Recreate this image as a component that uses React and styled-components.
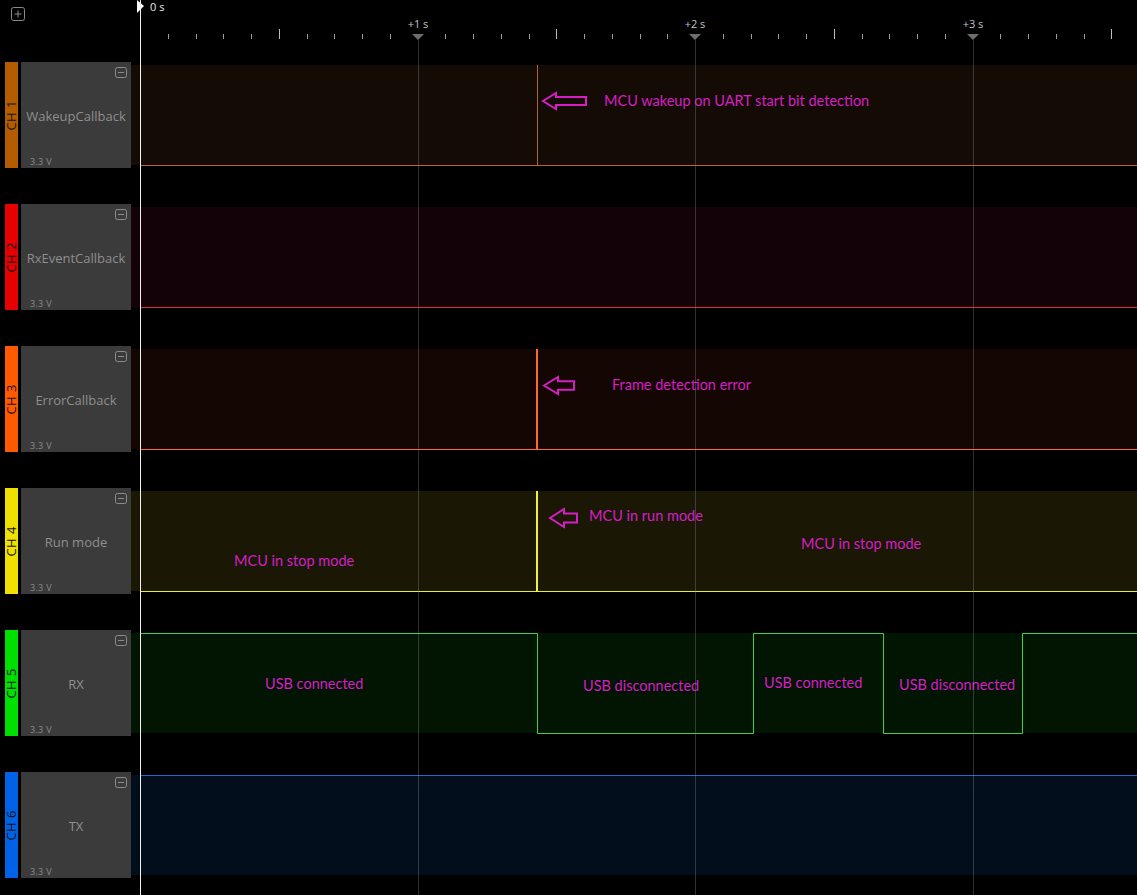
import React from "react";
import styled, { createGlobalStyle } from "styled-components";

const Global = createGlobalStyle`
  html, body { margin: 0; padding: 0; background: #000; }
  body { font-family: "Open Sans", "Noto Sans", sans-serif; }
`;

const MAGENTA = "#d41fc6";
const PX_PER_S = 277.5;
const ZERO_X = 140;
const BAND_LEFT = 131;
const BAND_W = 1137 - BAND_LEFT;

const channels = [
  {
    id: 1, name: "WakeupCallback", strip: "#b35c00", fill: "#140b05", line: "#c2622a",
    path: `M ${ZERO_X - BAND_LEFT} 100.5 H ${BAND_W}`,
    pulse: { x: 537 - BAND_LEFT, color: "#b0622e", w: 1 },
    notes: [
      { kind: "arrow", x: 412, y: 28, w: 43, h: 16 },
      { kind: "text", x: 473, y: 27, text: "MCU wakeup on UART start bit detection" },
    ],
  },
  {
    id: 2, name: "RxEventCallback", strip: "#e60000", fill: "#130308", line: "#e0283e",
    path: `M ${ZERO_X - BAND_LEFT} 100.5 H ${BAND_W}`,
    notes: [],
  },
  {
    id: 3, name: "ErrorCallback", strip: "#ff5a00", fill: "#140602", line: "#ff6a28",
    path: `M ${ZERO_X - BAND_LEFT} 100.5 H ${BAND_W}`,
    pulse: { x: 537 - BAND_LEFT, color: "#ff6a2a", w: 2 },
    notes: [
      { kind: "arrow", x: 413, y: 28, w: 30, h: 17 },
      { kind: "text", x: 481, y: 27, text: "Frame detection error" },
    ],
  },
  {
    id: 4, name: "Run mode", strip: "#f0e000", fill: "#1a1804", line: "#eaea40",
    path: `M ${ZERO_X - BAND_LEFT} 100.5 H ${BAND_W}`,
    pulse: { x: 537 - BAND_LEFT, color: "#f0f040", w: 2 },
    notes: [
      { kind: "arrow", x: 419, y: 18, w: 27, h: 18 },
      { kind: "text", x: 458, y: 16, text: "MCU in run mode" },
      { kind: "text", x: 103, y: 61, text: "MCU in stop mode" },
      { kind: "text", x: 670, y: 44, text: "MCU in stop mode" },
    ],
  },
  {
    id: 5, name: "RX", strip: "#00e000", fill: "#021402", line: "#40d040",
    path: `M ${ZERO_X - BAND_LEFT} 0.5 H ${537 - BAND_LEFT}.5 V 100.5 H ${753 - BAND_LEFT}.5 V 0.5 H ${883 - BAND_LEFT}.5 V 100.5 H ${1022 - BAND_LEFT}.5 V 0.5 H ${BAND_W}`,
    notes: [
      { kind: "text", x: 134, y: 42, text: "USB connected" },
      { kind: "text", x: 452, y: 44, text: "USB disconnected" },
      { kind: "text", x: 633, y: 41, text: "USB connected" },
      { kind: "text", x: 768, y: 43, text: "USB disconnected" },
    ],
  },
  {
    id: 6, name: "TX", strip: "#0062e6", fill: "#020e1c", line: "#2f62d0",
    path: `M ${ZERO_X - BAND_LEFT} 0.5 H ${BAND_W}`,
    notes: [],
  },
];

const Page = styled.div`
  position: relative;
  width: 1137px;
  height: 895px;
  overflow: hidden;
  background: #000;
`;

const Header = styled.div`
  display: flex;
  height: 62px;
`;

const AddCell = styled.div`
  width: ${BAND_LEFT}px;
  flex: none;
  padding: 5px 0 0 11px;
  box-sizing: border-box;
`;

const RulerSvg = styled.svg`
  display: block;
  flex: 1;
`;

const Rows = styled.div`
  display: flex;
  flex-direction: column;
  gap: 36px;
`;

const Row = styled.div`
  display: flex;
  height: 106px;
`;

const Strip = styled.div`
  width: 13px;
  margin-left: 5px;
  flex: none;
  background: ${(p) => p.$color};
  display: flex;
  align-items: center;
  justify-content: center;
`;

const StripText = styled.span`
  writing-mode: vertical-rl;
  transform: rotate(180deg);
  font-family: "Open Sans", sans-serif;
  font-size: 13px;
  line-height: 13px;
  color: #141414;
  letter-spacing: 0.5px;
`;

const Card = styled.div`
  position: relative;
  width: 110px;
  margin-left: 3px;
  flex: none;
  background: #3b3b3b;
  display: flex;
  align-items: center;
  justify-content: center;
`;

const CardTitle = styled.span`
  font-family: "Open Sans", sans-serif;
  font-size: 13px;
  color: #8e8e8e;
  margin-top: 2px;
  white-space: nowrap;
`;

const Volt = styled.span`
  position: absolute;
  left: 9px;
  bottom: 0px;
  font-family: "Open Sans", sans-serif;
  font-size: 9px;
  color: #8a8a8a;
  letter-spacing: 0.3px;
`;

const CollapseIcon = styled.svg`
  position: absolute;
  top: 5px;
  right: 4px;
`;

const Band = styled.div`
  position: relative;
  flex: 1;
  margin-top: 3px;
  height: 101px;
  background: linear-gradient(${(p) => p.$fill}, ${(p) => p.$fill}) 0 0 / 100% 100px no-repeat;
`;

const Wave = styled.svg`
  position: absolute;
  left: 0;
  top: 0;
  overflow: visible;
`;

const Note = styled.span`
  position: absolute;
  left: ${(p) => p.$x}px;
  top: ${(p) => p.$y}px;
  font-family: Lato, "Open Sans", sans-serif;
  font-size: 14.5px;
  line-height: 18px;
  color: ${MAGENTA};
  white-space: nowrap;
`;

const ArrowSvg = styled.svg`
  position: absolute;
  left: ${(p) => p.$x}px;
  top: ${(p) => p.$y}px;
  overflow: visible;
`;

const Overlay = styled.svg`
  position: absolute;
  left: 0;
  top: 0;
  pointer-events: none;
`;

function Arrow({ x, y, w, h }) {
  const head = Math.round(h * 0.8);
  const q = h / 4;
  const pts = [
    [0, h / 2],
    [head, 0],
    [head, q],
    [w, q],
    [w, h - q],
    [head, h - q],
    [head, h],
  ]
    .map((p) => p.join(","))
    .join(" ");
  return (
    <ArrowSvg $x={x} $y={y} width={w} height={h}>
      <polygon points={pts} fill="none" stroke={MAGENTA} strokeWidth="2" strokeLinejoin="miter" />
    </ArrowSvg>
  );
}

function Ruler() {
  const ticks = [];
  for (let i = 1; i <= 36; i++) {
    const x = ZERO_X - BAND_LEFT + (i * PX_PER_S) / 10;
    if (x > BAND_W) break;
    if (i % 10 === 0) continue;
    const tall = i % 10 === 5;
    ticks.push(
      <line
        key={i}
        x1={Math.round(x) + 0.5}
        x2={Math.round(x) + 0.5}
        y1={tall ? 29 : 34}
        y2={39}
        stroke={tall ? "#bdbdbd" : "#9a9a9a"}
        strokeWidth="1"
      />
    );
  }
  const markers = [1, 2, 3].map((s) => {
    const x = Math.round(ZERO_X - BAND_LEFT + s * PX_PER_S);
    return (
      <g key={s}>
        <polygon points={`${x - 6},34 ${x + 6},34 ${x},40`} fill="#6e6e6e" />
        <text x={x} y={28} fill="#c4c4c4" fontSize="11" textAnchor="middle" fontFamily="Open Sans, sans-serif">
          +{s} s
        </text>
      </g>
    );
  });
  return (
    <RulerSvg width={BAND_W} height={62}>
      {ticks}
      {markers}
      <polygon points={`${ZERO_X - BAND_LEFT - 3},0 ${ZERO_X - BAND_LEFT + 4},6 ${ZERO_X - BAND_LEFT - 3},13`} fill="#fff" />
      <text x={ZERO_X - BAND_LEFT + 10} y={11} fill="#e8e8e8" fontSize="11" fontFamily="Open Sans, sans-serif">
        0 s
      </text>
    </RulerSvg>
  );
}

export default function App() {
  return (
    <Page>
      <Global />
      <Header>
        <AddCell>
          <svg width="15" height="15" viewBox="0 0 15 15">
            <rect x="0.5" y="0.5" width="13" height="13" rx="2" fill="none" stroke="#8a8a8a" />
            <line x1="3.5" y1="7" x2="10.5" y2="7" stroke="#8a8a8a" />
            <line x1="7" y1="3.5" x2="7" y2="10.5" stroke="#8a8a8a" />
          </svg>
        </AddCell>
        <Ruler />
      </Header>
      <Rows>
        {channels.map((c) => (
          <Row key={c.id}>
            <Strip $color={c.strip}>
              <StripText>CH {c.id}</StripText>
            </Strip>
            <Card>
              <CollapseIcon width="12" height="11" viewBox="0 0 12 11">
                <rect x="0.5" y="0.5" width="11" height="10" rx="2" fill="none" stroke="#8c8c8c" />
                <line x1="3" y1="5.5" x2="9" y2="5.5" stroke="#8c8c8c" />
              </CollapseIcon>
              <CardTitle>{c.name}</CardTitle>
              <Volt>3.3 V</Volt>
            </Card>
            <Band $fill={c.fill}>
              <Wave width={BAND_W} height={101}>
                <path d={c.path} fill="none" stroke={c.line} strokeWidth="1" />
                {c.pulse && (
                  <line
                    x1={c.pulse.x + (c.pulse.w === 1 ? 0.5 : 0)}
                    x2={c.pulse.x + (c.pulse.w === 1 ? 0.5 : 0)}
                    y1={0}
                    y2={101}
                    stroke={c.pulse.color}
                    strokeWidth={c.pulse.w}
                  />
                )}
              </Wave>
              {c.notes.map((n, i) =>
                n.kind === "arrow" ? (
                  <Arrow key={i} x={n.x} y={n.y} w={n.w} h={n.h} />
                ) : (
                  <Note key={i} $x={n.x} $y={n.y}>
                    {n.text}
                  </Note>
                )
              )}
            </Band>
          </Row>
        ))}
      </Rows>
      <Overlay width={1137} height={895}>
        {[1, 2, 3].map((s) => {
          const x = Math.round(ZERO_X + s * PX_PER_S) + 0.5;
          return <line key={s} x1={x} x2={x} y1={40} y2={895} stroke="rgba(150,150,150,0.32)" strokeWidth="1" />;
        })}
        <line x1={ZERO_X + 0.5} x2={ZERO_X + 0.5} y1={0} y2={895} stroke="#f2f2f2" strokeWidth="1" />
      </Overlay>
    </Page>
  );
}
